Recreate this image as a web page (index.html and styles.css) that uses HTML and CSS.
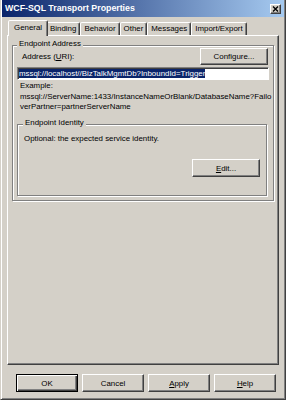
FILE: index.html
```html
<!DOCTYPE html>
<html>
<head>
<meta charset="utf-8">
<link rel="stylesheet" href="styles.css">
</head>
<body>
<div class="window">
  <div class="titlebar">
    <span class="title">WCF-SQL Transport Properties</span>
    <span class="close"><svg width="9" height="8" viewBox="0 0 9 8"><path d="M2 1.5 L7 6.5 M7 1.5 L2 6.5" stroke="#000" stroke-width="1.4"/></svg></span>
  </div>
  <div class="body">
    <div class="tabs">
      <div class="tab active">General</div>
      <div class="tab">Binding</div>
      <div class="tab">Behavior</div>
      <div class="tab">Other</div>
      <div class="tab">Messages</div>
      <div class="tab">Import/Export</div>
    </div>
    <div class="panel">
      <div class="group addr">
        <span class="legend">Endpoint Address</span>
        <div class="addr-row">
          <span class="lbl">Address (<u>U</u>RI):</span>
          <button class="btn cfg">Configure...</button>
        </div>
        <div class="field"><span class="sel">mssql://localhost//BizTalkMgmtDb?InboundId=Trigger</span></div>
        <div class="example">Example:<br>mssql://ServerName:1433/InstanceNameOrBlank/DatabaseName?Failo<br>verPartner=partnerServerName</div>
        <div class="group ident">
          <span class="legend">Endpoint Identity</span>
          <div class="opt">Optional: the expected service identity.</div>
          <div class="edit-row"><button class="btn edit"><u>E</u>dit...</button></div>
        </div>
      </div>
    </div>
    <div class="buttons">
      <button class="btn dlg default">OK</button>
      <button class="btn dlg">Cancel</button>
      <button class="btn dlg"><u>A</u>pply</button>
      <button class="btn dlg"><u>H</u>elp</button>
    </div>
  </div>
</div>
</body>
</html>
```
FILE: styles.css
```css
html, body {
  margin: 0;
  padding: 0;
  background: #d4d0c8;
}
body {
  font-family: "Liberation Sans", Arial, sans-serif;
  font-size: 7.9px;
  color: #000;
}
.window {
  width: 286px;
  height: 400px;
  box-sizing: border-box;
  border: 1px solid;
  border-top: 0;
  border-color: #d4d0c8 #404040 #404040 #d4d0c8;
  box-shadow: inset 1px 0 #fff, inset -1px -1px #808080;
  padding: 0 1px 2px 1px;
  display: flex;
  flex-direction: column;
  background: #d4d0c8;
}
.titlebar {
  height: 17px;
  flex: none;
  display: flex;
  justify-content: space-between;
  align-items: flex-start;
  background: linear-gradient(to right, #0a246a, #a6caf0);
}
.title {
  color: #fff;
  font-weight: bold;
  font-size: 8.8px;
  line-height: 17px;
  padding-left: 3px;
  white-space: nowrap;
}
.close {
  width: 11px;
  height: 10px;
  box-sizing: border-box;
  margin: 4px 3px 0 0;
  background: #d4d0c8;
  border: 1px solid;
  border-color: #fff #404040 #404040 #fff;
  box-shadow: inset -1px -1px #808080;
  display: flex;
  align-items: center;
  justify-content: center;
}
.close svg { display: block; }
.body {
  flex: 1;
  padding: 3px 5px 0 5px;
  display: flex;
  flex-direction: column;
}
.tabs {
  height: 15px;
  flex: none;
  display: flex;
  align-items: flex-end;
  padding-left: 3px;
}
.tab {
  position: relative;
  height: 13px;
  box-sizing: border-box;
  border: 1px solid;
  border-bottom: 0;
  border-color: #fff #404040 transparent #fff;
  box-shadow: inset -1px 0 #808080;
  border-radius: 2px 2px 0 0;
  padding: 0 3px;
  line-height: 12px;
  white-space: nowrap;
  background: #d4d0c8;
}
.tab.active {
  height: 16px;
  margin: 0 -2px -1px -2px;
  padding: 0 5px;
  line-height: 13px;
  z-index: 2;
}
.panel {
  height: 330px;
  flex: none;
  box-sizing: border-box;
  border: 1px solid;
  border-color: #fff #404040 #404040 #fff;
  box-shadow: inset -1px -1px #808080;
  padding: 9px 4px 0 4px;
  position: relative;
  z-index: 1;
}
.group {
  position: relative;
  box-sizing: border-box;
  border: 1px solid #808080;
  box-shadow: inset 1px 1px #fff, 1px 1px #fff;
}
.legend {
  position: absolute;
  top: -7px;
  left: 4px;
  padding: 0 2px;
  background: #d4d0c8;
  line-height: 10.5px;
  white-space: nowrap;
}
.addr {
  height: 156px;
  padding: 2px 4px 0 4px;
}
.addr-row {
  display: flex;
  justify-content: space-between;
  align-items: center;
}
.lbl {
  margin-left: 5px;
}
.btn {
  font: inherit;
  color: #000;
  background: #d4d0c8;
  box-sizing: border-box;
  border: 1px solid;
  border-color: #fff #404040 #404040 #fff;
  box-shadow: inset -1px -1px #808080;
  padding: 0;
  margin: 0;
  border-radius: 0;
}
.cfg {
  width: 68px;
  height: 17px;
  margin-right: 1px;
}
.field {
  height: 13px;
  margin-top: 2px;
  box-sizing: border-box;
  background: #fff;
  border: 1px solid;
  border-color: #808080 #fff #fff #808080;
  box-shadow: inset 1px 1px #404040;
  padding: 0 0 0 1px;
  line-height: 11px;
  white-space: nowrap;
  overflow: hidden;
}
.sel {
  background: #0a246a;
  color: #fff;
}
.example {
  margin-top: 1px;
  padding-left: 3px;
  line-height: 10.5px;
  white-space: nowrap;
}
.ident {
  height: 72px;
  margin-top: 11.5px;
  margin-right: 2px;
  padding: 9px 6px 0 6px;
}
.ident .legend {
  left: 5px;
}
.opt {
  line-height: 10.5px;
}
.edit-row {
  display: flex;
  justify-content: flex-end;
  margin-top: 14.5px;
}
.edit {
  width: 68px;
  height: 18px;
}
.buttons {
  margin-top: 9px;
  display: flex;
  justify-content: flex-end;
  gap: 4px;
  padding-right: 3px;
}
.dlg {
  width: 62px;
  height: 18px;
}
.dlg.default {
  border-color: #000;
  box-shadow: inset 1px 1px #fff, inset -1px -1px #404040, inset -2px -2px #808080;
}
```
